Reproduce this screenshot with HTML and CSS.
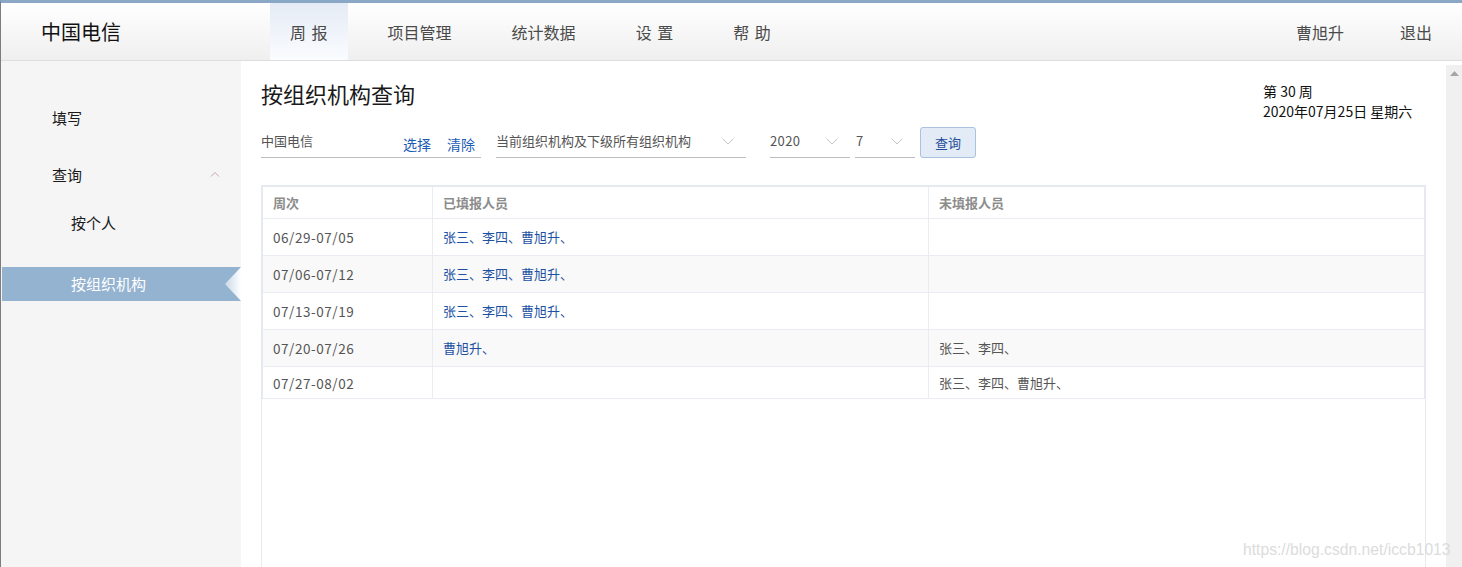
FILE: index.html
```html
<!DOCTYPE html>
<html lang="zh-CN">
<head>
<meta charset="utf-8">
<title>周报 - 按组织机构查询</title>
<link rel="stylesheet" href="styles.css">
</head>
<body>
<div class="page">
  <header class="topbar">
    <div class="logo">中国电信</div>
    <nav class="nav">
      <a class="nav-item active">周 报</a>
      <a class="nav-item">项目管理</a>
      <a class="nav-item">统计数据</a>
      <a class="nav-item">设 置</a>
      <a class="nav-item">帮 助</a>
    </nav>
    <div class="user">
      <a class="user-item">曹旭升</a>
      <a class="user-item">退出</a>
    </div>
  </header>
  <div class="body">
    <aside class="sidebar">
      <div class="side-item first">填写</div>
      <div class="side-item group">查询
        <svg class="caret" width="10" height="6" viewBox="0 0 10 6"><polyline points="1,5.5 5,1.5 9,5.5" fill="none" stroke="#c7a5a5" stroke-width="1"/></svg>
      </div>
      <div class="side-item sub">按个人</div>
      <div class="side-item sub active">按组织机构
        <svg class="notch" width="16" height="34" viewBox="0 0 16 34">
          <defs><linearGradient id="ng" x1="0" y1="0" x2="1" y2="0"><stop offset="0" stop-color="#c9d8e8"/><stop offset="1" stop-color="#ffffff"/></linearGradient></defs>
          <polygon points="16,0 0,17 16,34" fill="url(#ng)"/>
        </svg>
      </div>
    </aside>
    <main class="main">
      <div class="title-row">
        <h1 class="title">按组织机构查询</h1>
        <div class="week-info">
          <div>第 30 周</div>
          <div>2020年07月25日 星期六</div>
        </div>
      </div>
      <div class="form-row">
        <div class="field org">
          <span class="field-text">中国电信</span>
          <span class="links"><a class="link">选择</a><a class="link">清除</a></span>
        </div>
        <div class="field select scope">
          <span class="field-text">当前组织机构及下级所有组织机构</span>
          <svg class="chev" width="12" height="7" viewBox="0 0 12 7"><polyline points="0.5,0.5 6,6 11.5,0.5" fill="none" stroke="#c4c4c4" stroke-width="1"/></svg>
        </div>
        <div class="field select year">
          <span class="field-text">2020</span>
          <svg class="chev" width="12" height="7" viewBox="0 0 12 7"><polyline points="0.5,0.5 6,6 11.5,0.5" fill="none" stroke="#c4c4c4" stroke-width="1"/></svg>
        </div>
        <div class="field select month">
          <span class="field-text">7</span>
          <svg class="chev" width="12" height="7" viewBox="0 0 12 7"><polyline points="0.5,0.5 6,6 11.5,0.5" fill="none" stroke="#c4c4c4" stroke-width="1"/></svg>
        </div>
        <button class="btn">查询</button>
      </div>
      <div class="table-box">
        <table class="grid">
          <thead>
            <tr><th class="c1">周次</th><th class="c2">已填报人员</th><th class="c3">未填报人员</th></tr>
          </thead>
          <tbody>
            <tr><td class="wk">06/29-07/05</td><td class="done">张三、李四、曹旭升、</td><td class="todo"></td></tr>
            <tr class="alt"><td class="wk">07/06-07/12</td><td class="done">张三、李四、曹旭升、</td><td class="todo"></td></tr>
            <tr><td class="wk">07/13-07/19</td><td class="done">张三、李四、曹旭升、</td><td class="todo"></td></tr>
            <tr class="alt"><td class="wk">07/20-07/26</td><td class="done">曹旭升、</td><td class="todo">张三、李四、</td></tr>
            <tr class="last"><td class="wk">07/27-08/02</td><td class="done"></td><td class="todo">张三、李四、曹旭升、</td></tr>
          </tbody>
        </table>
      </div>
    </main>
    <div class="scrollbar">
      <svg class="sb-up" width="9" height="5" viewBox="0 0 9 5"><polygon points="0,5 4.5,0 9,5" fill="#a6a6a6"/></svg>
    </div>
  </div>
  <div class="watermark">https://blog.csdn.net/iccb1013</div>
</div>
</body>
</html>
```
FILE: styles.css
```css
* { box-sizing: border-box; }
html, body { margin: 0; padding: 0; }
body {
  width: 1462px;
  height: 567px;
  overflow: hidden;
  background: #fff;
  font-family: "Noto Sans CJK SC", "Noto Sans", sans-serif;
  color: #222;
}
a { text-decoration: none; cursor: pointer; }
.page {
  position: relative;
  width: 1462px;
  height: 567px;
  border-top: 3px solid #8ba7c6;
  border-left: 1px solid #7d7d7d;
  display: flex;
  flex-direction: column;
}
.topbar {
  height: 58px;
  flex: none;
  display: flex;
  align-items: stretch;
  background: linear-gradient(#ffffff, #efefef);
  border-bottom: 1px solid #dedede;
}
.logo {
  width: 269px;
  padding-left: 40px;
  display: flex;
  align-items: center;
  font-size: 20px;
  line-height: 24px;
  color: #111;
  padding-top: 1px;
}
.nav {
  display: flex;
  gap: 20px;
  word-spacing: 2px;
}
.nav-item {
  padding: 1px 20px 0;
  display: flex;
  align-items: center;
  font-size: 16px;
  line-height: 20px;
  color: #4a4a4a;
}
.nav-item.active {
  background: linear-gradient(#e5ebf5, #fafcff);
}
.user {
  margin-left: auto;
  display: flex;
  gap: 56px;
  padding-right: 30px;
}
.user-item {
  display: flex;
  align-items: center;
  padding-top: 1px;
  font-size: 16px;
  color: #4a4a4a;
}
.body {
  flex: 1;
  display: flex;
  min-height: 0;
}
.sidebar {
  width: 240px;
  flex: none;
  background: #f5f5f5;
  padding-top: 40px;
}
.side-item {
  position: relative;
  height: 34px;
  line-height: 34px;
  font-size: 15px;
  color: #1a1a1a;
  padding-left: 51px;
}
.side-item.group { margin-top: 23px; }
.side-item.sub { padding-left: 70px; }
.side-item.sub:not(.active) { margin-top: 14px; }
.side-item.active {
  margin-top: 27px;
  margin-left: 1px;
  padding-left: 69px;
  background: #94b3d1;
  color: #fff;
}
.caret {
  position: absolute;
  left: 209px;
  top: 13px;
}
.notch {
  position: absolute;
  right: 0;
  top: 0;
}
.main {
  flex: 1;
  min-width: 0;
  padding: 17px 20px 0;
  display: flex;
  flex-direction: column;
}
.title-row {
  height: 30px;
  display: flex;
  justify-content: space-between;
  align-items: flex-start;
}
.title {
  margin: 0;
  font-size: 22px;
  line-height: 30px;
  font-weight: normal;
  color: #1a1a1a;
}
.week-info {
  margin-top: 3px;
  font-size: 14px;
  line-height: 20px;
  color: #111;
  width: 163px;
}
.form-row {
  margin-top: 19px;
  height: 31px;
  display: flex;
  align-items: stretch;
}
.field {
  display: flex;
  align-items: center;
  border-bottom: 1px solid #bdbdbd;
  font-size: 13px;
  color: #555;
}
.field-text { line-height: 18px; }
.org {
  width: 220px;
  justify-content: space-between;
  padding-right: 6px;
}
.org .field-text { margin-top: -2px; }
.links {
  display: flex;
  gap: 16px;
  margin-top: 4px;
}
.link {
  font-size: 14px;
  color: #1d5cb4;
}
.select {
  justify-content: space-between;
  padding-right: 12px;
}
.select .field-text { margin-top: -2px; }
.year .field-text, .month .field-text { letter-spacing: 0.4px; }
.chev { margin-top: -2px; }
.scope { width: 250px; margin-left: 15px; }
.year { width: 80px; margin-left: 24px; }
.month { width: 60px; margin-left: 5px; padding-left: 1px; }
.btn {
  margin-left: 5px;
  width: 56px;
  border: 1px solid #a9c2e0;
  border-radius: 3px;
  background: #e3ebf6;
  font-family: inherit;
  font-size: 13px;
  color: #1f4e9a;
  padding: 0;
}
.table-box {
  margin-top: 27px;
  flex: 1;
  border: 1px solid #e6eaf0;
  border-bottom: none;
}
.grid {
  width: 100%;
  border-collapse: separate;
  border-spacing: 0;
  border: 1px solid #e6eaf0;
  border-bottom: none;
  font-size: 13px;
}
.grid th, .grid td {
  box-sizing: border-box;
  padding: 0 0 0 10px;
  text-align: left;
  border-bottom: 1px solid #e9edf3;
  border-right: 1px solid #e9edf3;
  height: 37px;
  line-height: 18px;
  color: #555;
}
.grid th:last-child, .grid td:last-child { border-right: none; }
.grid th {
  height: 32px;
  font-weight: bold;
  color: #8c8c8c;
}
.grid .c1 { width: 170px; }
.grid .c2 { width: 496px; }
.grid td.wk { letter-spacing: 0.55px; font-size: 13.5px; }
.grid td.done { color: #1d52a3; }
.grid td.todo { color: #555; }
.grid tr.alt td { background: #f9f9f9; }
.grid tr.last td { height: 32px; }
.scrollbar {
  width: 16px;
  flex: none;
  margin-top: 4px;
  background: #f0f0f0;
  display: flex;
  justify-content: center;
  padding-top: 6px;
}
.sb-up { display: block; }
.watermark {
  position: absolute;
  left: 1242px;
  top: 538px;
  font-family: "Liberation Sans", Arial, sans-serif;
  font-size: 15.7px;
  color: #dcdcdc;
  white-space: nowrap;
}
```
